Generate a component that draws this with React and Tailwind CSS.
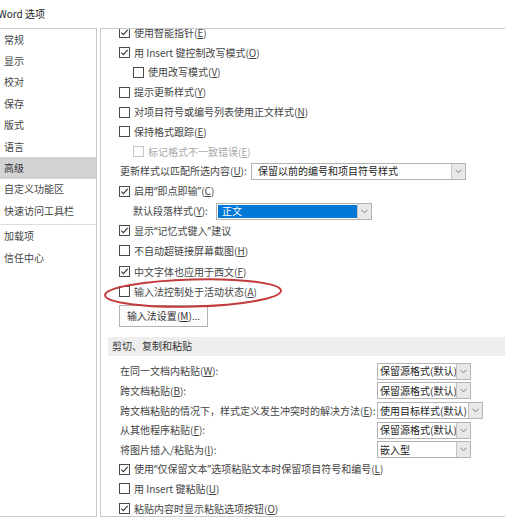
import React from 'react';

const sideItems = ['常规', '显示', '校对', '保存', '版式', '语言', '高级', '自定义功能区', '快速访问工具栏'];
const sideItems2 = ['加载项', '信任中心'];

// 下拉框右侧的小箭头
const Chevron = () => (
  <svg width="7" height="5" viewBox="0 0 7 5">
    <path d="M0.5 0.8 L3.5 3.8 L6.5 0.8" fill="none" stroke="#7a7a7a" strokeWidth="1" />
  </svg>
);

const Box = ({ checked, disabled }) => (
  <span
    className={`w-[11px] h-[11px] shrink-0 border bg-white flex items-center justify-center ${
      disabled ? 'border-[#c6c6c6]' : 'border-[#4a4a4a]'
    }`}
  >
    {checked && (
      <svg width="9" height="9" viewBox="0 0 9 9">
        <path d="M1.3 4.6 L3.4 6.7 L7.7 1.9" fill="none" stroke="#333" strokeWidth="1.1" />
      </svg>
    )}
  </span>
);

// 带下划线的快捷键字母
const Key = ({ k }) => (
  <>
    (<span className="underline underline-offset-[1px]">{k}</span>)
  </>
);

// 西文窄引号
const Q = ({ c }) => <span className="font-['Noto_Sans',sans-serif]">{c}</span>;

const Check = ({ checked, disabled, indent, children }) => (
  <div className={`h-[19.8px] flex items-center gap-[4px] ${indent ? 'pl-[14px]' : ''}`}>
    <Box checked={checked} disabled={disabled} />
    <span className={`whitespace-nowrap ${disabled ? 'text-[#a8a8a8]' : ''}`}>{children}</span>
  </div>
);

const Select = ({ w, value, highlight, arrow, pad }) => (
  <div className={`flex h-[17px] border border-[#b4b4b4] bg-white ${w}`}>
    <div
      className={`flex-1 flex items-center whitespace-nowrap overflow-hidden text-[#222] ${
        highlight ? 'bg-[#0078d7] text-white pl-[4px] m-[1px] mr-0' : pad || 'pl-[6px]'
      }`}
    >
      {value}
    </div>
    <div className={`${arrow || 'w-[14px]'} shrink-0 border-l border-[#c4c4c4] bg-[#e8e8e8] flex items-center justify-center`}>
      <Chevron />
    </div>
  </div>
);

const PasteRow = ({ label, value, w }) => (
  <div className="h-[19.6px] flex items-center">
    <span className="w-[258px] shrink-0 pl-[1px] whitespace-nowrap">{label}</span>
    <Select w={w || 'w-[94px]'} value={value} arrow="w-[14px]" pad="pl-[2px]" />
  </div>
);

export default function App() {
  return (
    <div className="relative w-[505px] h-[521px] overflow-hidden bg-white text-[10px] leading-none text-[#444] font-['Noto_Sans_CJK_SC','Noto_Sans',sans-serif]">
      <div className="h-[28px] flex items-center -ml-[2px] text-[#222]">Word 选项</div>

      <div className="flex gap-[3px] h-[489px]">
        {/* 左侧导航 */}
        <aside className="w-[97px] shrink-0 border border-l-0 border-[#c9c9c9]">
          {sideItems.map((s) => (
            <div
              key={s}
              className={`h-[21.4px] flex items-center pl-[4px] ${s === '高级' ? 'bg-[#d3d3d3] text-[#333]' : ''}`}
            >
              {s}
            </div>
          ))}
          <div className="h-px bg-[#dcdcdc] mt-[2px] mb-[1px]" />
          {sideItems2.map((s) => (
            <div key={s} className="h-[21.4px] flex items-center pl-[4px]">
              {s}
            </div>
          ))}
        </aside>

        {/* 右侧选项 */}
        <main className="flex-1 border border-r-0 border-[#c9c9c9] overflow-hidden">
          <div className="-mt-[6px] pl-[18px]">
            <Check checked>使用智能指针<Key k="E" /></Check>
            <Check checked>用 Insert 键控制改写模式<Key k="O" /></Check>
            <Check indent>使用改写模式<Key k="V" /></Check>
            <Check>提示更新样式<Key k="Y" /></Check>
            <Check>对项目符号或编号列表使用正文样式<Key k="N" /></Check>
            <Check>保持格式跟踪<Key k="E" /></Check>
            <Check indent disabled>标记格式不一致错误<Key k="E" /></Check>
            <div className="h-[19.8px] flex items-center">
              <span className="w-[132px] shrink-0 pl-[1px] whitespace-nowrap">更新样式以匹配所选内容<Key k="U" />:</span>
              <Select w="w-[215px]" value="保留以前的编号和项目符号样式" />
            </div>
            <Check checked>启用<Q c="“" />即点即输<Q c="”" /><Key k="C" /></Check>
            <div className="h-[19.8px] flex items-center pl-[14px]">
              <span className="w-[83px] shrink-0 whitespace-nowrap">默认段落样式<Key k="Y" />:</span>
              <Select w="w-[156px]" value="正文" highlight />
            </div>
            <Check checked>显示<Q c="“" />记忆式键入<Q c="”" />建议</Check>
            <Check>不自动超链接屏幕截图<Key k="H" /></Check>
            <div className="h-[1.4px]" />
            <Check checked>中文字体也应用于西文<Key k="F" /></Check>
            <Check>输入法控制处于活动状态<Key k="A" /></Check>
            <button className="mt-[3px] w-[89px] h-[22px] border border-[#b4b4b4] bg-[#fcfcfc] text-[#333] flex items-center justify-center whitespace-nowrap">
              输入法设置<Key k="M" />...
            </button>

            <div className="mt-[10px] -ml-[11px] h-[19px] bg-[#eeeeee] flex items-center pl-[4px] text-[#333]">
              剪切、复制和粘贴
            </div>

            <div className="mt-[6px]">
              <PasteRow label={<>在同一文档内粘贴<Key k="W" />:</>} value="保留源格式(默认)" />
              <PasteRow label={<>跨文档粘贴<Key k="B" />:</>} value="保留源格式(默认)" />
              <PasteRow
                label={<>跨文档粘贴的情况下，样式定义发生冲突时的解决方法<Key k="E" />:</>}
                value="使用目标样式(默认)"
                w="w-[106px]"
              />
              <PasteRow label={<>从其他程序粘贴<Key k="F" />:</>} value="保留源格式(默认)" />
              <PasteRow label={<>将图片插入/粘贴为<Key k="I" />:</>} value="嵌入型" />
              <div className="h-[19.6px] flex items-center gap-[4px]">
                <Box checked />
                <span className="whitespace-nowrap">使用<Q c="“" />仅保留文本<Q c="”" />选项粘贴文本时保留项目符号和编号<Key k="L" /></span>
              </div>
              <div className="h-[19.6px] flex items-center gap-[4px]">
                <Box />
                <span className="whitespace-nowrap">用 Insert 键粘贴<Key k="U" /></span>
              </div>
              <div className="h-[19.6px] flex items-center gap-[4px]">
                <Box checked />
                <span className="whitespace-nowrap">粘贴内容时显示粘贴选项按钮<Key k="O" /></span>
              </div>
            </div>
          </div>
        </main>
      </div>

      {/* 红色圈注 */}
      <svg className="absolute left-[102px] top-[276px] pointer-events-none" width="182" height="34" viewBox="0 0 182 34">
        <ellipse cx="91" cy="17" rx="88" ry="13.5" fill="none" stroke="#c23a3a" strokeWidth="2" transform="rotate(-1.5 91 17)" />
      </svg>
    </div>
  );
}
